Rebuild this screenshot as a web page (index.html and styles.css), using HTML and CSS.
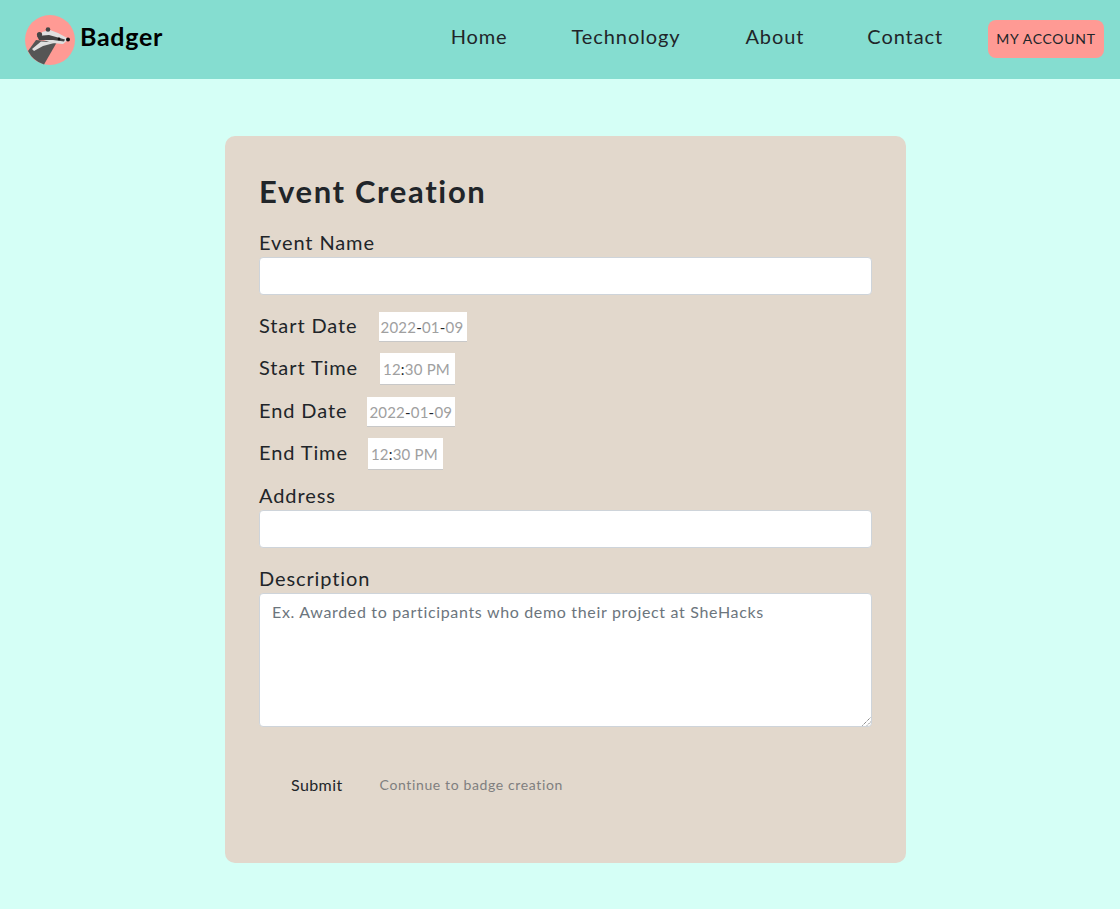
FILE: index.html
```html
<!DOCTYPE html>
<html lang="en">
<head>
<meta charset="utf-8">
<title>Badger</title>
<link rel="stylesheet" href="styles.css">
</head>
<body>
<header class="nav">
  <a class="brand">
    <svg class="logo" viewBox="0 0 50 50" width="50" height="50">
      <circle cx="25" cy="25" r="25" fill="#ff9a94"/>
      <path d="M3 36 L11 25 L32 27 L19 49.5 Q8 46 3 36Z" fill="#555"/>
      <path d="M7 34 L16 26.5 L31 27.5 L18 31 L9 36Z" fill="#e0e0e0"/>
      <path d="M16 24 L17 17 L25 15 L33 18 L44 24 L38 29 L27 28Z" fill="#e0e0e0"/>
      <path d="M12 21 L24 20 L40 24.5 L39 26.5 L28 25 L14 25Z" fill="#444"/>
      <circle cx="23" cy="14.5" r="2.3" fill="#444"/>
      <circle cx="14.5" cy="19.5" r="2.6" fill="#444"/>
      <circle cx="43" cy="24.5" r="2" fill="#111"/>
      <circle cx="34" cy="24" r="1.4" fill="#111"/>
    </svg>
    <span class="brand-name">Badger</span>
  </a>
  <nav class="links">
    <a class="link link-home">Home</a>
    <a class="link link-tech">Technology</a>
    <a class="link link-about">About</a>
    <a class="link link-contact">Contact</a>
  </nav>
  <a class="account">MY ACCOUNT</a>
</header>
<main class="page">
  <form class="card">
    <h1 class="title">Event Creation</h1>
    <label class="label label-first">Event Name</label>
    <div class="input"></div>
    <div class="row row-sd"><label class="label">Start Date</label><div class="picker picker-date"><span>2022</span><b>-</b><span>01</span><b>-</b><span>09</span></div></div>
    <div class="row row-st"><label class="label">Start Time</label><div class="picker picker-time"><span>12</span><b>:</b><span>30 PM</span></div></div>
    <div class="row row-ed"><label class="label">End Date</label><div class="picker picker-date"><span>2022</span><b>-</b><span>01</span><b>-</b><span>09</span></div></div>
    <div class="row row-et"><label class="label">End Time</label><div class="picker picker-time"><span>12</span><b>:</b><span>30 PM</span></div></div>
    <label class="label label-address">Address</label>
    <div class="input"></div>
    <label class="label label-desc">Description</label>
    <div class="textarea">Ex. Awarded to participants who demo their project at SheHacks
      <svg class="grip" viewBox="0 0 9 9" width="9" height="9"><path d="M0.5 8.5L8.5 0.5M5 8.5L8.5 5" stroke="#555" stroke-width="1" stroke-dasharray="1 1" fill="none"/></svg>
    </div>
    <div class="actions">
      <a class="submit">Submit</a>
      <span class="hint">Continue to badge creation</span>
    </div>
  </form>
</main>
</body>
</html>
```
FILE: styles.css
```css
* { box-sizing: border-box; }
html, body { margin: 0; }
body {
  min-height: 909px;
  background: #d5fff6;
  color: #212529;
  font-family: "Lato", "Noto Sans", sans-serif;
}
.nav {
  height: 79px;
  background: #85ddd0;
  display: flex;
  align-items: center;
  padding: 0 16px 2px 25px;
}
.brand { display: flex; align-items: center; gap: 5px; }
.logo { display: block; margin-top: 2px; }
.brand-name { font-size: 25px; font-weight: 700; color: #000; letter-spacing: 0.7px; margin-bottom: 5px; }
.links { display: flex; margin-left: auto; margin-bottom: 5px; font-size: 20px; letter-spacing: 0.9px; color: #212529; }
.link-tech { margin-left: 64px; }
.link-about { margin-left: 65px; }
.link-contact { margin-left: 63px; }
.account {
  margin-left: 45px;
  width: 116px;
  height: 38px;
  border-radius: 8px;
  background: #ff9a94;
  color: #212529;
  font-size: 14px;
  letter-spacing: 0.7px;
  display: flex;
  align-items: center;
  justify-content: center;
}
.page { display: flex; justify-content: center; padding: 57px 0 0 11px; }
.card {
  width: 681px;
  height: 727px;
  background: #e2d8cc;
  border-radius: 10px;
  padding: 34px;
}
.title { margin: -1px 0 0; font-size: 31px; line-height: 44px; font-weight: 700; letter-spacing: 1.65px; color: #212529; }
.label { display: block; font-size: 20px; line-height: 24px; letter-spacing: 0.9px; }
.label-first { margin-top: 17px; }
.input {
  height: 38px;
  margin-top: 3px;
  background: #fff;
  border: 1px solid #ced4da;
  border-radius: 4px;
}
.row { display: flex; align-items: center; }
.row .label { margin-bottom: 4px; }
.row-sd { margin-top: 17px; height: 30px; gap: 21px; }
.row-st { margin-top: 11px; height: 32px; gap: 22px; }
.row-ed { margin-top: 12px; height: 30px; gap: 20px; }
.row-et { margin-top: 11px; height: 32px; gap: 20px; }
.picker {
  height: 100%;
  background: #fff;
  border-bottom: 1px solid #c8c8c8;
  font-size: 15px;
  color: #a0a0a0;
  display: flex;
  align-items: center;
  padding: 0 2px;
  letter-spacing: 0.2px;
}
.picker b { font-weight: 400; color: #212529; }
.picker-date { width: 88px; }
.picker-time { width: 75px; padding-left: 3px; }
.label-address { margin-top: 13px; }
.label-desc { margin-top: 18px; }
.textarea {
  position: relative;
  height: 134px;
  margin-top: 3px;
  background: #fff;
  border: 1px solid #ced4da;
  border-radius: 4px;
  padding: 7px 12px;
  font-size: 16px;
  line-height: 22px;
  letter-spacing: 0.67px;
  color: #6c757d;
}
.grip { position: absolute; right: 0; bottom: 0; }
.actions { display: flex; align-items: center; margin-top: 48px; padding-left: 32px; }
.submit { font-size: 16px; letter-spacing: 0.4px; color: #212529; }
.hint { margin-left: 37px; font-size: 14px; letter-spacing: 0.63px; color: #7f7f7f; }
```
